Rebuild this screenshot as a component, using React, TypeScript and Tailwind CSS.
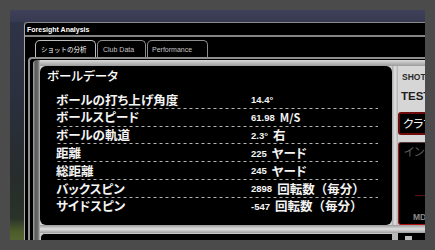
import React from "react";

const rows = [
  { label: "ボールの打ち上げ角度", num: "14.4°", unit: "", paren: false },
  { label: "ボールスピード", num: "61.98", unit: "M/S", paren: false },
  { label: "ボールの軌道", num: "2.3°", unit: "右", paren: false },
  { label: "距離", num: "225", unit: "ヤード", paren: false },
  { label: "総距離", num: "245", unit: "ヤード", paren: false },
  { label: "バックスピン", num: "2898", unit: "回転数（毎分）", paren: true },
  { label: "サイドスピン", num: "-547", unit: "回転数（毎分）", paren: true },
];

export default function App() {
  return (
    <div className="w-[435px] h-[250px] bg-[#4b4b4b] p-[10px] overflow-hidden">
      <div className="w-[415px] h-[230px] flex flex-col overflow-hidden">
        {/* top desktop band */}
        <div className="h-[12px] shrink-0 bg-[linear-gradient(to_bottom,#3e4159,#363950)]" />
        <div className="flex flex-1 min-h-0">
          {/* left desktop strip */}
          <div className="w-[14px] shrink-0 bg-[linear-gradient(to_bottom,#2f3346_0%,#2b2f3e_35%,#272c2c_70%,#2a3229_90%,#4d5b2b_96%,#55632f_100%)]" />
          {/* window */}
          <div className="flex-1 min-w-0 bg-black border-l border-t border-l-[#a8a8a8] border-t-[#8a8a8a] rounded-tl-[4px] flex flex-col overflow-hidden">
            <div className="h-[12px] shrink-0 flex items-center pl-[2px] font-['Liberation_Sans',sans-serif] font-bold text-[7px] text-white leading-none">
              Foresight Analysis
            </div>
            <div className="h-[2px] shrink-0 bg-[#858585]" />
            {/* tabs */}
            <div className="h-[20px] shrink-0 flex items-end pl-[10px] font-['Liberation_Sans',sans-serif] text-[7px] leading-none">
              <div className="w-[61px] h-[17px] border-[1.5px] border-b-0 border-[#bdbdbd] rounded-t-[5px] flex items-center pl-[5px] text-white font-['Noto_Sans_CJK_JP',sans-serif] text-[6.5px]">
                ショットの分析
              </div>
              <div className="w-[49px] ml-[1px] h-[17px] border-[1.5px] border-b-0 border-[#8d8d8d] rounded-t-[5px] flex items-center pl-[5px] text-[#c4c4c4]">
                Club Data
              </div>
              <div className="w-[61px] ml-[1px] h-[17px] border-[1.5px] border-b-0 border-[#8d8d8d] rounded-t-[5px] flex items-center pl-[4px] text-[#c4c4c4]">
                Performance
              </div>
            </div>
            {/* content frame */}
            <div className="flex-1 min-h-0 ml-[3px] border-l-2 border-t-2 border-[#8f8f8f] rounded-tl-[4px] pl-[3px] pt-[1px]">
              <div className="flex h-full">
                <div className="w-[7px] shrink-0 rounded-tl-[4px] bg-[linear-gradient(to_right,#a6a6a6,#5c5c5c_35%,#6a6a6a_70%,#b8b8b8)]" />
                <div className="flex-1 flex flex-col bg-[#cfcfcf]">
                  <div className="h-[6px] shrink-0 bg-[linear-gradient(to_bottom,#dadada,#9c9c9c)]" />
                  <div className="flex h-[159px] shrink-0">
                    {/* main panel */}
                    <div className="w-[352px] h-[159px] shrink-0 bg-black rounded-[6px] font-['Noto_Sans_CJK_JP',sans-serif] text-white">
                      <div className="h-[20px] flex items-center pl-[7px] text-[12.5px] font-medium [font-feature-settings:'palt']">
                        ボールデータ
                      </div>
                      <div className="ml-[15px] w-[323px] mt-[5px]">
                        {rows.map((r, i) => (
                          <div
                            key={r.label}
                            className={
                              "h-[17.8px] flex items-center " +
                              (i < rows.length - 1
                                ? "bg-[linear-gradient(to_right,#b4b4b4_50%,transparent_50%)] bg-[length:6px_1px] bg-repeat-x bg-bottom"
                                : "")
                            }
                          >
                            <div className="w-[196px] pl-[1px] text-[12.5px] font-bold leading-none [font-feature-settings:'palt'] text-[#f4f4f4]">
                              {r.label}
                            </div>
                            <div className="flex items-center leading-none">
                              <span className="font-['Liberation_Sans',sans-serif] font-bold text-[9.5px] text-[#f4f4f4]">
                                {r.num}
                              </span>
                              {r.unit && (
                                <span
                                  className={
                                    "ml-[5px] font-bold text-[#f4f4f4] " +
                                    (r.paren
                                      ? "text-[12.5px] ml-[4px]"
                                      : r.unit === "M/S"
                                      ? "text-[11px]"
                                      : "text-[12.5px] [font-feature-settings:'palt']")
                                  }
                                >
                                  {r.unit}
                                </span>
                              )}
                            </div>
                          </div>
                        ))}
                      </div>
                    </div>
                    {/* vertical silver band */}
                    <div className="w-[6px] shrink-0 bg-[linear-gradient(to_right,#a8a8a8,#e2e2e2_50%,#b0b0b0)]" />
                    {/* right column */}
                    <div className="w-[40px] shrink-0 flex flex-col bg-[#d6d6d6]">
                      <div className="h-[6px]" />
                      <div className="h-[10px] pl-[4px] flex items-center font-['Liberation_Sans',sans-serif] font-bold text-[8.5px] text-[#2a2a2a] leading-none whitespace-nowrap">
                        SHOT
                      </div>
                      <div className="h-[8px]" />
                      <div className="h-[13px] pl-[3px] flex items-center font-['Liberation_Sans',sans-serif] font-bold text-[11.5px] text-[#1e1e1e] leading-none whitespace-nowrap">
                        TEST
                      </div>
                      <div className="h-[9px]" />
                      <div className="h-[23px] bg-black border-2 border-[#6e0c0c] rounded-[3px] flex items-center pl-[3px] font-['Noto_Sans_CJK_JP',sans-serif] text-[11.5px] text-white leading-none whitespace-nowrap [font-feature-settings:'palt']">
                        クラブ
                      </div>
                      <div className="h-[7px]" />
                      <div className="h-[83px] bg-black border border-[#b01010] border-t-[#5a3a3a] rounded-[3px] flex flex-col font-['Noto_Sans_CJK_JP',sans-serif] leading-none">
                        <div className="h-[14px] mt-[2px] pl-[5px] flex items-center text-[11.5px] text-[#5e5e5e] whitespace-nowrap [font-feature-settings:'palt']">
                          インパクト
                        </div>
                        <div className="mt-[36px] ml-[16px] h-px bg-[#5c1212]" />
                        <div className="mt-[16px] h-[10px] pl-[14px] flex items-center font-['Liberation_Sans',sans-serif] font-bold text-[8.5px] text-[#8a8a8a] whitespace-nowrap">
                          MD
                        </div>
                      </div>
                    </div>
                  </div>
                  {/* bottom band */}
                  <div className="h-[8px] shrink-0 bg-[linear-gradient(to_bottom,#9a9a9a,#dedede_50%,#a0a0a0)]" />
                  <div className="flex flex-1">
                    <div className="w-[352px] shrink-0 bg-black border-l border-t border-[#c8c8c8] rounded-tl-[5px]" />
                    <div className="w-[6px] shrink-0 bg-[#b8b8b8]" />
                    <div className="flex-1 bg-black pl-[7px] pt-[3px]">
                      <div className="w-[7px] h-[4px] bg-[#bdbdbd]" />
                    </div>
                  </div>
                </div>
              </div>
            </div>
          </div>
        </div>
      </div>
    </div>
  );
}
